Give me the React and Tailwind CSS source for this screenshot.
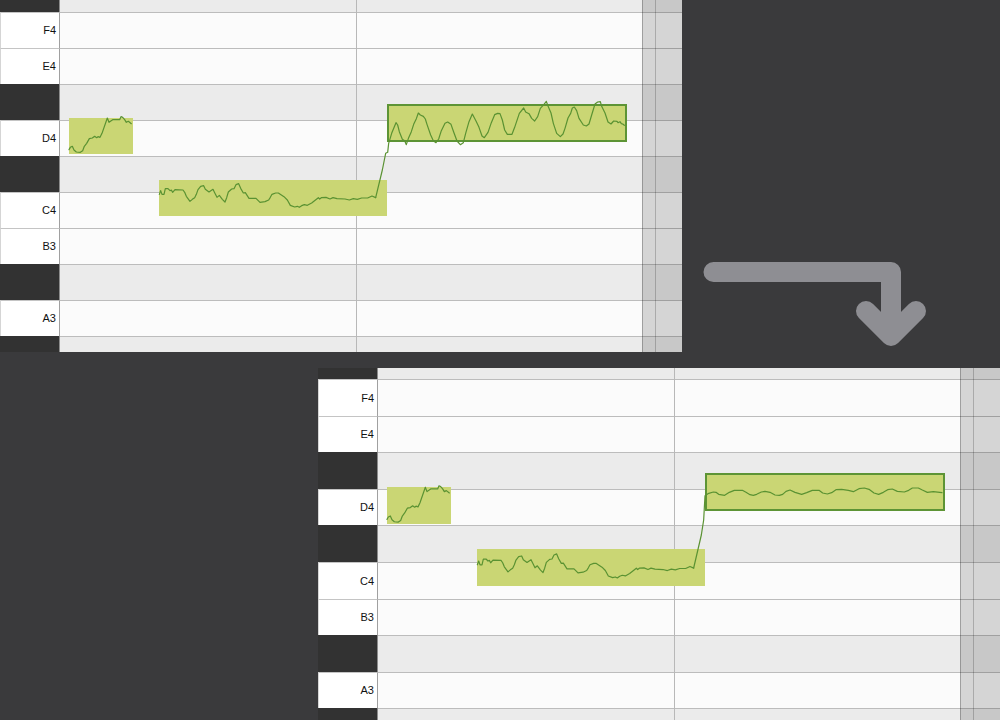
import React from "react";
import clsx from "clsx";

const PITCHES = ["F#4", "F4", "E4", "D#4", "D4", "C#4", "C4", "B3", "A#3", "A3", "G#3"];

const ROWS_BEFORE = [
  "h-[12px]", "h-[36px]", "h-[36px]", "h-[36px]", "h-[36px]", "h-[36px]",
  "h-[36px]", "h-[36px]", "h-[36px]", "h-[36px]", "h-[16px]",
];
const ROWS_AFTER = [
  "h-[11px]", "h-[37px]", "h-[36px]", "h-[37px]", "h-[36px]", "h-[37px]",
  "h-[37px]", "h-[36px]", "h-[37px]", "h-[36px]", "h-[12px]",
];

const NOTES_BEFORE = [
  "left-[69px] top-[118px] w-[64px] h-[36px]",
  "left-[159px] top-[180px] w-[228px] h-[36px]",
  "left-[387px] top-[104px] w-[240px] h-[38px] border-2 border-[#5d9435]",
];
const NOTES_AFTER = [
  "left-[69px] top-[119px] w-[64px] h-[37px]",
  "left-[159px] top-[181px] w-[228px] h-[37px]",
  "left-[387px] top-[105px] w-[240px] h-[38px] border-2 border-[#5d9435]",
];

// Pitch curves, in thirds of a pixel.
const FIRST =
  "207,449 211,442 217,439 222,450 229,456 241,457 248,452 253,439 260,430 268,416 277,414 284,409 290,413 294,410 300,412 306,400 322,354 327,367 338,359 359,359 363,350 368,352 374,359 379,367 385,364 394,371";
const SECOND =
  "28,73 32,62 36,73 42,73 46,56 54,56 60,62 64,60 68,67 75,59 99,60 104,67 109,79 120,94 127,88 134,83 139,73 144,59 152,49 161,47 166,58 177,66 189,58 194,68 201,82 208,76 217,88 225,96 230,83 235,66 245,57 252,56 258,44 266,41 272,55 280,69 286,68 297,85 318,85 330,97 345,95 356,90 361,82 366,73 377,69 385,69 402,80 412,90 421,106 434,111 442,109 448,112 455,107 463,104 472,106 485,99 505,83 509,87 514,83 528,82 540,87 549,83 561,86 585,87 598,90 610,86 622,88 635,84 653,84 666,78 677,83";
const WIDE =
  "17,323 37,240 43,210 47,190 53,187 56,160 65,130 78,98 83,105 88,125 97,148 104,152 109,164 116,143 124,125 131,103 139,86 145,69 151,75 160,79 166,87 171,103 182,135 190,152 198,158 206,147 214,122 225,100 233,96 243,103 251,126 261,153 271,164 280,158 287,130 297,95 307,72 318,93 327,112 336,138 343,143 354,127 364,98 374,74 383,70 390,71 397,90 404,120 412,133 426,133 434,112 448,70 461,54 467,66 477,71 485,85 494,93 503,80 511,55 522,43 529,34 534,48 543,69 550,100 560,130 571,140 579,132 585,115 594,84 602,70 607,54 613,51 620,62 627,85 640,105 649,108 657,102 665,75 675,42 683,36 691,35 695,49 705,69 714,96 723,102 731,93 741,94 744,98 750,95 754,101 758,102 763,106";
const FLAT =
  "11,324 34,225 41,180 45,107 54,101 70,96 78,97 86,103 104,106 118,97 133,91 157,91 168,97 180,104 190,106 200,103 214,96 225,94 240,97 255,105 268,106 278,103 288,94 300,90 315,97 335,103 350,98 367,91 387,91 398,99 412,102 425,98 438,89 455,88 475,91 490,95 507,86 523,84 537,88 552,99 566,103 580,97 593,89 607,87 622,94 643,96 656,91 667,84 685,84 697,90 712,97 730,95 756,98";

function PianoRoll({ label, rows, notes, children }) {
  return (
    <section aria-label={label} className="relative w-[68.2%] overflow-hidden">
      <ul>
        {PITCHES.map((pitch, i) => {
          const black = pitch.includes("#");
          return (
            <li key={pitch} className={clsx("flex", rows[i])}>
              <div
                className={clsx(
                  "flex w-[60px] shrink-0 items-center justify-end border-r pr-[3px] text-[11px] leading-none text-[#111]",
                  black
                    ? "border-r-[#8c8c8c] bg-[#323232]"
                    : "border-l border-t border-l-[#d5d5d5] border-r-[#a0a0a0] border-t-[#c4c4c4] bg-white",
                )}
              >
                {black ? null : pitch}
              </div>
              <div
                className={clsx(
                  "flex-1",
                  i > 0 && "border-t border-[#bcbcbc]",
                  black ? "bg-[#ebebeb]" : "bg-[#fbfbfb]",
                )}
              />
            </li>
          );
        })}
      </ul>
      <div className="absolute inset-y-0 left-[356px] w-px bg-[#b8b8b8]" />
      <div className="absolute inset-y-0 left-[642px] right-0 border-l border-black/25 bg-black/15">
        <div className="ml-[12px] h-full w-px bg-black/20" />
      </div>
      {notes.map((place) => (
        <div key={place} className={clsx("absolute bg-[#cad674]", place)} />
      ))}
      <svg
        viewBox="0 0 2046 1056"
        className="absolute left-0 top-0 h-[352px] w-[682px]"
        fill="none"
        stroke="#5a9232"
        strokeWidth="3.6"
        strokeLinejoin="round"
        strokeLinecap="round"
        aria-hidden="true"
      >
        {children}
      </svg>
    </section>
  );
}

export default function App() {
  return (
    <main className="flex min-h-screen flex-col gap-4 bg-[#3a3a3c] font-['Liberation_Sans',Arial,sans-serif]">
      <div className="flex">
        <PianoRoll label="Before" rows={ROWS_BEFORE} notes={NOTES_BEFORE}>
          <polyline points={FIRST} />
          <polyline points={SECOND} transform="translate(450 510)" />
          <polyline points={WIDE} transform="translate(1110 270)" />
        </PianoRoll>
        <svg
          viewBox="0 0 224 86"
          className="mb-[5px] ml-[21px] h-[86px] w-[224px] self-end"
          fill="none"
          stroke="#8e8e93"
          strokeWidth="20"
          strokeLinecap="round"
          strokeLinejoin="round"
          aria-hidden="true"
        >
          <path d="M10.500 11H188V74M163 50L188 75L213 50" />
        </svg>
      </div>
      <div className="flex justify-end">
        <PianoRoll label="After" rows={ROWS_AFTER} notes={NOTES_AFTER}>
          <g transform="translate(0 -2) scale(1 1.016)">
            <polyline points={FIRST} />
            <polyline points={SECOND} transform="translate(450 510)" />
          </g>
          <polyline points={FLAT} transform="translate(1116 276)" />
        </PianoRoll>
      </div>
    </main>
  );
}
